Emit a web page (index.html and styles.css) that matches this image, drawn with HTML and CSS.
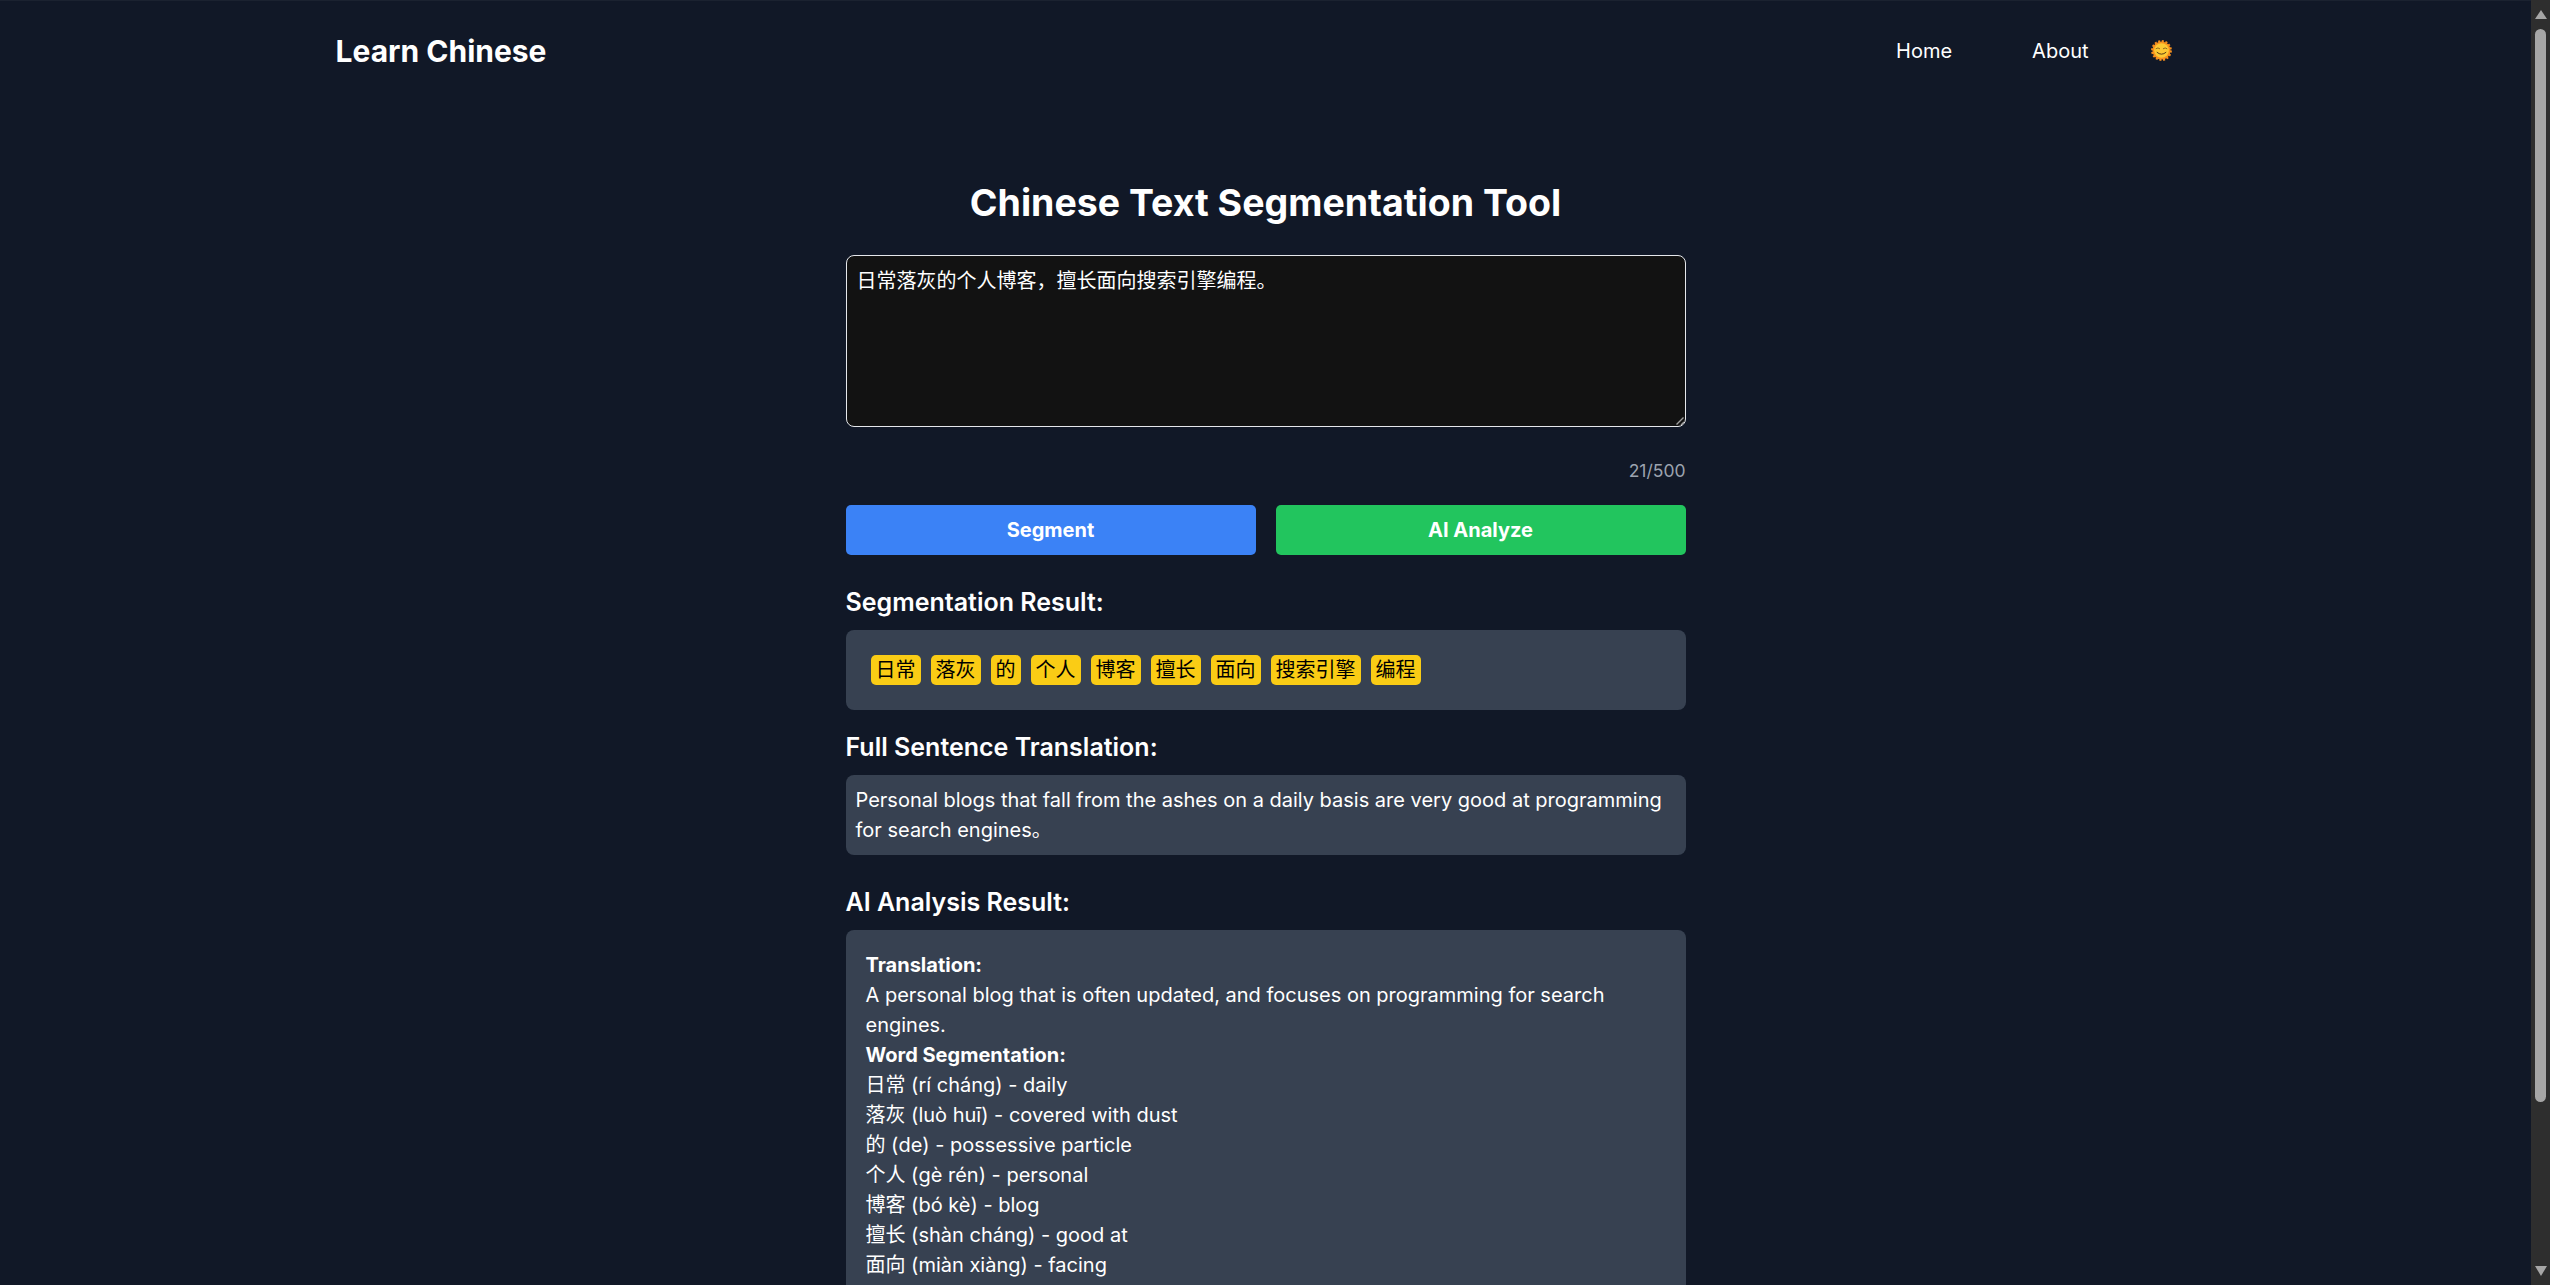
FILE: index.html
```html
<!DOCTYPE html>
<html lang="en">
<head>
<meta charset="UTF-8">
<meta name="viewport" content="width=device-width, initial-scale=1.0">
<title>Learn Chinese</title>
<link rel="stylesheet" href="styles.css">
</head>
<body>

<div class="page">
    <nav class="menu">
        <a class="logo" href="#">Learn Chinese</a>
        <div class="menu-links">
            <a href="#">Home</a>
            <a href="#">About</a>
            <button class="theme-toggle" aria-label="Toggle theme">
                <svg viewBox="0 0 20 20" width="21" height="21">
                    <circle cx="10" cy="10" r="8.600" fill="#f7901e" stroke="#f7901e" stroke-width="2.600" stroke-dasharray="1.900 1.480"/>
                    <circle cx="10" cy="10" r="7" fill="#fcc933"/>
                    <path fill="none" stroke="#7a5a1e" stroke-width="0.800" stroke-linecap="round" d="M4.800 8.200q1.900-1.500 3.500 0M11.700 8.200q1.900-1.500 3.500 0"/>
                    <path fill="none" stroke="#4a3414" stroke-width="0.900" stroke-linecap="round" d="M5.800 11.800q4.200 3.600 8.400 0"/>
                </svg>
            </button>
        </div>
    </nav>

    <main class="tool">
        <h1>Chinese Text Segmentation Tool</h1>

        <div class="input-wrap">
            <textarea class="input-box" maxlength="500">日常落灰的个人博客，擅长面向搜索引擎编程。</textarea>
            <svg class="grip" viewBox="0 0 10 10" width="10" height="10">
                <path fill="none" stroke="#a0a0a0" stroke-width="1.400" d="M2.500 9.500l7-7M7 10l3-3"/>
            </svg>
        </div>
        <div class="char-count">21/500</div>

        <div class="actions">
            <button class="btn btn-blue">Segment</button>
            <button class="btn btn-green">AI Analyze</button>
        </div>

        <h3 class="first-heading">Segmentation Result:</h3>
        <div class="panel chips">
            <span class="chip">日常</span>
            <span class="chip">落灰</span>
            <span class="chip">的</span>
            <span class="chip">个人</span>
            <span class="chip">博客</span>
            <span class="chip">擅长</span>
            <span class="chip">面向</span>
            <span class="chip">搜索引擎</span>
            <span class="chip">编程</span>
        </div>

        <h3 class="next-heading">Full Sentence Translation:</h3>
        <div class="panel translation">Personal blogs that fall from the ashes on a daily basis are very good at programming for search engines。</div>

        <h3 class="first-heading">AI Analysis Result:</h3>
        <div class="panel analysis">
            <strong>Translation:</strong><br>
            A personal blog that is often updated, and focuses on programming for search engines.<br>
            <strong>Word Segmentation:</strong><br>
            日常 (rí cháng) - daily<br>
            落灰 (luò huī) - covered with dust<br>
            的 (de) - possessive particle<br>
            个人 (gè rén) - personal<br>
            博客 (bó kè) - blog<br>
            擅长 (shàn cháng) - good at<br>
            面向 (miàn xiàng) - facing
        </div>
    </main>
</div>

<div class="scrollbar">
    <span class="arrow-up"></span>
    <span class="thumb"></span>
    <span class="arrow-down"></span>
</div>

</body>
</html>
```

FILE: styles.css
```css
body {
    display: flex;
    height: 100vh;
    margin: 0;
    overflow: hidden;
    background-color: #111827;
    color: #ffffff;
    font-family: "Inter", "Noto Sans CJK SC", sans-serif;
    font-size: 20px;
    line-height: 30px;
}

.page {
    flex: 1;
    min-width: 0;
    overflow: hidden;
    border-top: 1px solid #1b2230;
}

.menu {
    display: flex;
    justify-content: space-between;
    align-items: center;
    height: 99px;
    padding: 0 359px 0 335.500px;
}

.menu a {
    color: #ffffff;
    text-decoration: none;
}

.menu .logo {
    font-size: 30px;
    font-weight: 700;
}

.menu-links {
    display: flex;
    align-items: center;
    gap: 80px;
}

.theme-toggle {
    display: flex;
    margin-left: -17.500px;
    padding: 0;
    background: none;
    border: none;
    cursor: pointer;
}

.tool {
    width: 840px;
    margin: 0 auto;
    padding: 83px 0 0;
}

h1 {
    margin: 0 0 32px;
    font-size: 37.500px;
    line-height: 40px;
    font-weight: 700;
    text-align: center;
}

.input-wrap {
    position: relative;
}

.input-box {
    display: block;
    box-sizing: border-box;
    width: 100%;
    height: 172px;
    padding: 10px;
    background-color: #121212;
    border: 1px solid #e5e7eb;
    border-radius: 8px;
    color: #ffffff;
    font: inherit;
    outline: none;
    resize: none;
}

.grip {
    position: absolute;
    right: 2px;
    bottom: 2px;
}

.char-count {
    margin-top: 29px;
    color: #9ca3af;
    font-size: 17.500px;
    line-height: 30px;
    text-align: right;
}

.actions {
    display: flex;
    gap: 20px;
    margin-top: 19px;
}

.btn {
    flex: 1;
    height: 50px;
    border: none;
    border-radius: 5px;
    color: #ffffff;
    font: inherit;
    font-weight: 700;
    cursor: pointer;
}

.btn-blue {
    background-color: #3b82f6;
}

.btn-green {
    background-color: #22c55e;
}

h3 {
    margin: 0 0 12px;
    font-size: 25px;
    line-height: 32px;
    font-weight: 600;
}

.first-heading {
    margin-top: 31px;
}

.next-heading {
    margin-top: 21px;
}

.panel {
    background-color: #374151;
    border-radius: 8px;
}

.chips {
    display: flex;
    flex-wrap: wrap;
    gap: 10px;
    padding: 25px;
}

.chip {
    padding: 0 5px;
    background-color: #facc15;
    border-radius: 5px;
    color: #000000;
}

.translation {
    padding: 10px;
}

.analysis {
    padding: 20px 20px 120px;
}

/* headless chrome hides the real one, so it is drawn */
.scrollbar {
    display: flex;
    flex-direction: column;
    align-items: center;
    flex: none;
    box-sizing: border-box;
    width: 19px;
    padding: 10px 0 9px;
    background-color: #2e2e2e;
}

.arrow-up,
.arrow-down {
    flex: none;
    width: 0;
    height: 0;
    border-left: 6.500px solid transparent;
    border-right: 6.500px solid transparent;
}

.arrow-up {
    border-bottom: 9px solid #a6a6a6;
}

.arrow-down {
    border-top: 10px solid #a6a6a6;
}

.thumb {
    flex: none;
    width: 11px;
    height: 1073px;
    margin: 10px 0 164px;
    background-color: #a6a6a6;
    border-radius: 6px;
}
```
